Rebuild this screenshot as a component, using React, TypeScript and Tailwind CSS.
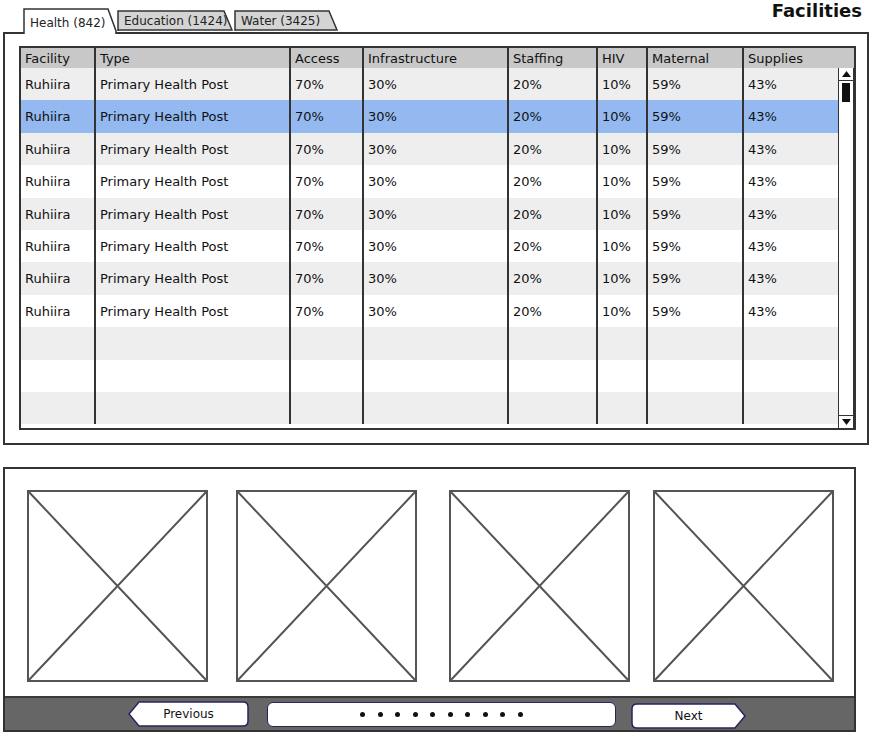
import type { ReactNode } from 'react';

const FONT = { fontFamily: '"DejaVu Sans", "Noto Sans", sans-serif' };

const columns = [
  { key: 'facility', label: 'Facility', w: 'w-[75px]' },
  { key: 'type', label: 'Type', w: 'w-[195px]' },
  { key: 'access', label: 'Access', w: 'w-[73px]' },
  { key: 'infra', label: 'Infrastructure', w: 'w-[145px]' },
  { key: 'staffing', label: 'Staffing', w: 'w-[89px]' },
  { key: 'hiv', label: 'HIV', w: 'w-[50px]' },
  { key: 'maternal', label: 'Maternal', w: 'w-[96px]' },
];

const sample = ['Ruhiira', 'Primary Health Post', '70%', '30%', '20%', '10%', '59%', '43%'];
const rows: (string[] | null)[] = [...Array(8).fill(sample), null, null, null];

function Tab({ label, active, w }: { label: string; active?: boolean; w: number }) {
  const h = active ? 26 : 21;
  return (
    <div
      className={`relative flex items-center pl-[7px] text-[12px] text-[#222] ${active ? 'z-10 -mb-[2px] pt-[3px]' : 'pt-[1px] mb-[1px]'}`}
      style={{ width: w, height: h }}
    >
      <svg className="absolute inset-0" width={w} height={h}>
        <path
          d={`M1 ${h} V1 H${w - 9} L${w - 1} ${h - (active ? 3 : 1)} ${active ? `L${w - 1} ${h}` : `L1 ${h - 1}`}`}
          fill={active ? '#fff' : '#d4d4d4'}
          stroke="#333"
          strokeWidth="1.5"
        />
        {active ? <rect x="2" y={h - 3} width={w - 4} height="3" fill="#fff" /> : null}
      </svg>
      <span className="relative">{label}</span>
    </div>
  );
}

function Scrollbar() {
  return (
    <div className="w-[16px] h-full flex flex-col border-x-[1.5px] border-[#333] bg-white">
      <div className="h-[13px] border-b-[1.5px] border-[#333] flex items-center justify-center">
        <svg width="9" height="6"><path d="M4.5 0 L9 6 H0 Z" fill="#111" /></svg>
      </div>
      <div className="mx-auto mt-[2px] w-[8px] h-[19px] bg-[#111]" />
      <div className="flex-1" />
      <div className="h-[13px] border-t-[1.5px] border-[#333] flex items-center justify-center">
        <svg width="9" height="6"><path d="M0 0 H9 L4.5 6 Z" fill="#111" /></svg>
      </div>
    </div>
  );
}

function Placeholder({ className }: { className?: string }) {
  return (
    <svg className={className} width="181" height="192">
      <rect x="1" y="1" width="179" height="190" fill="#fff" stroke="#555" strokeWidth="2" />
      <path d="M1 1 L180 191 M180 1 L1 191" stroke="#555" strokeWidth="2" />
    </svg>
  );
}

function ArrowButton({ dir, children, w }: { dir: 'left' | 'right'; children: ReactNode; w: number }) {
  const h = 26;
  const d =
    dir === 'left'
      ? `M11 1 H${w - 6} Q${w - 1} 1 ${w - 1} 6 V${h - 6} Q${w - 1} ${h - 1} ${w - 6} ${h - 1} H11 L1 ${h / 2} Z`
      : `M6 1 H${w - 11} L${w - 1} ${h / 2} L${w - 11} ${h - 1} H6 Q1 ${h - 1} 1 ${h - 6} V6 Q1 1 6 1 Z`;
  return (
    <div className="relative flex items-center justify-center text-[12px] text-[#111]" style={{ width: w, height: h }}>
      <svg className="absolute inset-0" width={w} height={h}>
        <path d={d} fill="#fff" stroke="#2b2360" strokeWidth="1.5" />
      </svg>
      <span className="relative">{children}</span>
    </div>
  );
}

export default function App() {
  return (
    <div className="w-[870px] h-[741px] bg-white relative overflow-hidden" style={FONT}>
      <div className="flex items-end justify-between h-[32px]">
        <div className="flex items-end pl-[23px]">
          <Tab label="Health (842)" active w={94} />
          <Tab label="Education (1424)" w={116} />
          <div className="w-[1px]" />
          <Tab label="Water (3425)" w={104} />
        </div>
        <h1 className="self-start pr-[8px] text-[18px] font-bold leading-[22px] text-[#111]">Facilities</h1>
      </div>

      <div className="ml-[3px] w-[866px] h-[413px] border-2 border-[#333] pl-[14px] pt-[12px]">
        <div className="w-[837px] h-[384px] border-2 border-[#333] flex flex-col text-[13px] text-[#111]">
          <div className="flex h-[20px] bg-[#c8c8c8] shrink-0">
            {columns.map((c) => (
              <div key={c.key} className={`${c.w} border-r-2 border-[#333] pl-[4px] leading-[21px]`}>
                {c.label}
              </div>
            ))}
            <div className="flex-1 pl-[4px] leading-[21px]">Supplies</div>
          </div>
          <div className="flex flex-1">
            <div className="flex-1 flex flex-col">
              {rows.map((r, i) => {
                const selected = i === 1;
                const bg = selected ? 'bg-[#93b9f0]' : i % 2 === 0 ? 'bg-[#eeeeee]' : 'bg-white';
                return (
                  <div key={i} className={`flex h-[32.4px] ${bg}`}>
                    {columns.map((c, j) => (
                      <div key={c.key} className={`${c.w} border-r-2 border-[#333] pl-[4px] pt-[1px] flex items-center`}>
                        {r ? r[j] : ''}
                      </div>
                    ))}
                    <div className="flex-1 pl-[4px] pt-[1px] flex items-center">{r ? r[7] : ''}</div>
                  </div>
                );
              })}
            </div>
            <Scrollbar />
          </div>
        </div>
      </div>

      <div className="mt-[22px] ml-[3px] w-[853px] h-[265px] border-2 border-[#333] flex flex-col">
        <div className="flex pt-[21px]">
          <Placeholder className="ml-[22px]" />
          <Placeholder className="ml-[28px]" />
          <Placeholder className="ml-[32px]" />
          <Placeholder className="ml-[23px]" />
        </div>
        <div className="flex-1" />
        <div className="h-[34px] bg-[#666] border-t-2 border-[#3a3a3a] flex items-center">
          <div className="ml-[123px]">
            <ArrowButton dir="left" w={121}>Previous</ArrowButton>
          </div>
          <div className="ml-[18px] w-[349px] h-[25px] bg-white border-[1.5px] border-[#2b2360] rounded-[6px] flex items-center justify-center gap-[12.5px]">
            {Array.from({ length: 10 }).map((_, i) => (
              <span key={i} className="w-[5px] h-[5px] rounded-full bg-[#111]" />
            ))}
          </div>
          <div className="ml-[15px] mt-[3px]">
            <ArrowButton dir="right" w={115}>Next</ArrowButton>
          </div>
        </div>
      </div>
    </div>
  );
}
